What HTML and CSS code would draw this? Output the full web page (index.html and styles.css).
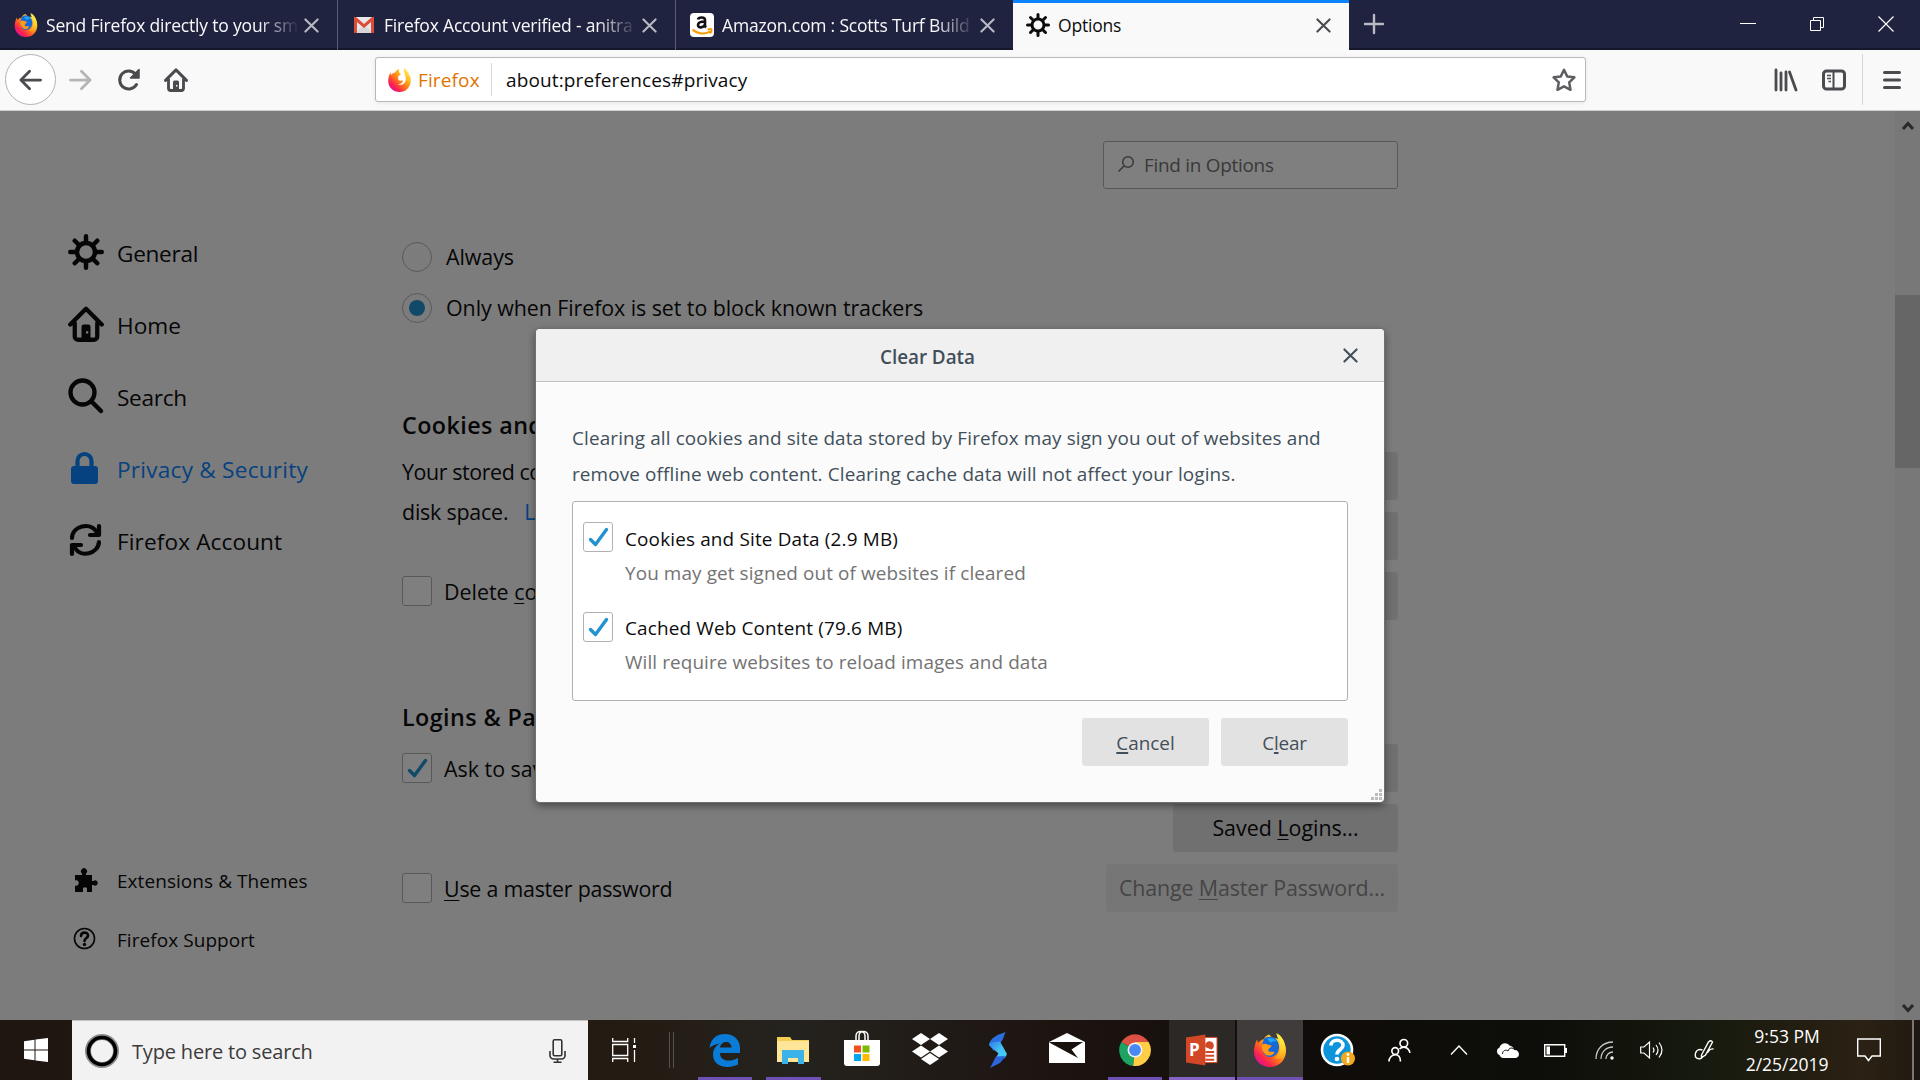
FILE: index.html
```html
<!DOCTYPE html>
<html lang="en">
<head>
<meta charset="utf-8">
<title>Options</title>
<link rel="stylesheet" href="styles.css">
</head>
<body>
<svg class="sprite" aria-hidden="true">
  <defs>
    <linearGradient id="ff-body" x1="0.9" y1="0.1" x2="0.2" y2="0.9">
      <stop offset="0" stop-color="#fff44f"/><stop offset="0.35" stop-color="#ffae1c"/><stop offset="0.62" stop-color="#ff6a1f"/><stop offset="0.85" stop-color="#ff2150"/><stop offset="1" stop-color="#e31587"/>
    </linearGradient>
    <linearGradient id="ff-flame" x1="0.5" y1="0" x2="0.5" y2="1">
      <stop offset="0" stop-color="#fff44f"/><stop offset="0.6" stop-color="#ffd22e"/><stop offset="1" stop-color="#ff9a16"/>
    </linearGradient>
    <linearGradient id="swift" x1="0" y1="0" x2="1" y2="1">
      <stop offset="0" stop-color="#2c7be5"/><stop offset="0.55" stop-color="#45c4f5"/><stop offset="1" stop-color="#3fd0f7"/>
    </linearGradient>
    <symbol id="firefox" viewBox="0 0 32 34">
      <path d="M3.2 6.5 4 10 C5.5 8 8 6.500 10 6 10.500 4 13 2 15 1.500 L19 5 26 6 C26 3 24 2 23 0 27.500 3 29 6 30 10 31.500 12 32 15 32 18 32 27 25 34 16 34 7 34 0 27.500 0 18.500 0 14 1.500 9 3.200 6.500Z" fill="url(#ff-body)"/>
      <path d="M10 6 C12 3.500 17 3 20 4.500 23 6.500 25.500 10 25 15 24.500 21 20 24 16 24 11 24 8.500 20 9 16 L8 12Z" fill="#1668d8"/>
      <path d="M13 6 C16 4 21 5 22.500 9 21 8 18 8 17 10Z" fill="#19a9f5"/>
      <path d="M8 11.500 C10 10.500 12 10.500 13.500 11.500 L17.500 12.500 C17.500 14 15.500 15 14.500 16 L14.500 18.500 C16.500 19.500 18.500 18 20.500 19 19.500 22 16.500 23 14 22.500 10 21.500 7.500 17 8 11.500Z" fill="#ff9a16"/>
      <path d="M22.500 0 C22 4 27 8 26.500 15 26 20 24 23 20 25 L28 26 C33 20 32 10 28.500 6 26.500 3.500 24 2 22.500 0Z" fill="url(#ff-flame)"/>
    </symbol>
    <symbol id="firefox-mono" viewBox="0 0 32 34">
      <path d="M3.200 6.500 4 10 C5.500 8 8 6.500 10 6 10.500 4 13 2 15 1.500 L15.500 6 18 9 14 12 14.500 17 C17 19 19 17 21 18 20 22 17 23 14 22.500 19 26 25 22 25 16 25 9 21 5 22.500 0 25 3 29 6 30 10 31.500 12 32 15 32 18 32 27 25 34 16 34 7 34 0 27.500 0 18.500 0 14 1.500 9 3.200 6.500Z" fill="url(#ff-body)"/>
    </symbol>
    <symbol id="gear" viewBox="0 0 32 32">
      <circle cx="16" cy="16" r="8" fill="none" stroke="currentColor" stroke-width="4"/>
      <path d="M16 2v5M16 25v5M2 16h5M25 16h5M6 6l4 4M22 22l4 4M26 6l-4 4M10 22l-4 4" stroke="currentColor" stroke-width="4" stroke-linecap="round"/>
    </symbol>
    <symbol id="house" viewBox="0 0 32 32">
      <path d="M2 16.500 16 2.500 30 16.500M6 15V27a3 3 0 0 0 3 3H23a3 3 0 0 0 3-3V15" fill="none" stroke="currentColor" stroke-width="3.800" stroke-linecap="round" stroke-linejoin="round"/>
      <path fill-rule="evenodd" d="M12 18.500a2 2 0 0 1 2-2h4a2 2 0 0 1 2 2V30h-8zM16 22.500v2h2v-2z" fill="currentColor"/>
    </symbol>
    <symbol id="cross" viewBox="0 0 16 16"><path d="M1.500 1.500l13 13M14.500 1.500l-13 13" stroke="currentColor" stroke-width="2.200" stroke-linecap="round"/></symbol>
    <symbol id="tick" viewBox="0 0 30 30"><path d="M7.500 17.500 12.500 22.500 23.500 7.500" fill="none" stroke="#2292d0" stroke-width="3.400" stroke-linecap="round" stroke-linejoin="round"/></symbol>
  </defs>
</svg>

<header class="tabbar">
  <div class="tab">
    <svg class="favicon"><use href="#firefox"/></svg>
    <span class="tab-title tab-fade">Send Firefox directly to your sm</span>
    <svg class="tab-close"><use href="#cross"/></svg>
  </div>
  <div class="tab">
    <svg class="favicon" viewBox="0 0 24 24"><path d="M3 4h18v16H3z" fill="#e8e8e8"/><path d="M3 20l9-8 9 8z" fill="#d6d6d6"/><path d="M2 20V4h2l8 7 8-7h2v16h-3V9l-7 6-7-6v11z" fill="#dd4b39"/></svg>
    <span class="tab-title tab-fade">Firefox Account verified - anitra</span>
    <svg class="tab-close"><use href="#cross"/></svg>
  </div>
  <div class="tab tab-last">
    <svg class="favicon" viewBox="0 0 24 24"><rect width="24" height="24" rx="4" fill="#fff"/><path d="M8 6.500C8.500 4 15 3.500 15 7V12.500C15 13.500 15.500 14 16 14.500M15 8.500C10 8.500 8 9.500 8 12 8 15.500 13.500 15 15 11.500" fill="none" stroke="#111" stroke-width="2.600"/><path d="M2.500 16.500C8 21.500 15 21.500 20 18.500M17.500 16.500c2-.5 3.500-.5 4 0 .3 1-.3 2.500-1.500 4" fill="none" stroke="#f90" stroke-width="2"/></svg>
    <span class="tab-title tab-fade">Amazon.com : Scotts Turf Build</span>
    <svg class="tab-close"><use href="#cross"/></svg>
  </div>
  <div class="tab tab-active">
    <svg class="favicon"><use href="#gear"/></svg>
    <span class="tab-title">Options</span>
    <svg class="tab-close"><use href="#cross"/></svg>
  </div>
  <svg class="new-tab" viewBox="0 0 22 22"><path d="M11 2v18M2 11h18" stroke="#b9b9c3" stroke-width="2.400" stroke-linecap="round"/></svg>
  <div class="window-buttons">
    <svg viewBox="0 0 16 16"><path d="M0 7.500h16" stroke="#fff"/></svg>
    <svg viewBox="0 0 16 16"><path d="M1.500 4.500h10v10h-10zM4.500 4V1.500h10v10H12" fill="none" stroke="#fff"/></svg>
    <svg viewBox="0 0 16 16"><path d="M.5.5l15 15M15.500.5l-15 15" stroke="#fff" stroke-width="1.200"/></svg>
  </div>
</header>

<nav class="toolbar">
  <div class="back"><svg viewBox="0 0 26 24"><path d="M24 12H3M12 2.500 2.500 12 12 21.500" fill="none" stroke="#4a4a4f" stroke-width="3" stroke-linecap="round" stroke-linejoin="round"/></svg></div>
  <svg class="nav-forward" viewBox="0 0 26 24"><path d="M2 12H23M14 2.500 23.500 12 14 21.500" fill="none" stroke="#b5b5b7" stroke-width="3" stroke-linecap="round" stroke-linejoin="round"/></svg>
  <svg class="nav-reload" viewBox="0 0 24 24"><path d="M19.500 16.500A9 9 0 1 1 18.500 6" fill="none" stroke="#4a4a4f" stroke-width="3" stroke-linecap="round"/><path d="M22 1.500V10H13.500z" fill="#4a4a4f" stroke="#4a4a4f" stroke-width="1.500" stroke-linejoin="round"/></svg>
  <svg class="nav-home"><use href="#house"/></svg>
  <div class="urlbar">
    <svg class="url-logo"><use href="#firefox-mono"/></svg>
    <span class="url-brand">Firefox</span>
    <span class="url-text">about:preferences#privacy</span>
    <svg class="url-star" viewBox="0 0 24 24"><path d="M12 1.800 15.200 8.400 22.400 9.300 17.200 14.400 18.500 21.800 12 18.300 5.500 21.800 6.800 14.400 1.600 9.300 8.800 8.400Z" fill="none" stroke="#5f5f63" stroke-width="2.500" stroke-linejoin="round"/></svg>
  </div>
  <svg class="nav-library" viewBox="0 0 24 24"><path d="M2 2v20M7 5v17M12 4v18M15.500 4 22 22" stroke="#4a4a4f" stroke-width="2.800" stroke-linecap="round"/></svg>
  <svg class="nav-panel" viewBox="0 0 24 24"><rect x="1.500" y="3" width="21" height="18" rx="3" fill="none" stroke="#4a4a4f" stroke-width="3"/><path d="M11.500 3v18" stroke="#4a4a4f" stroke-width="2"/><path d="M5 7.500h4M5 10.500h4M6.500 13.500h2.500" stroke="#4a4a4f" stroke-width="1.500"/></svg>
  <div class="menu-cell"><svg viewBox="0 0 18 20"><path d="M1.500 2.500h15M1.500 10h15M1.500 17.500h15" stroke="#4a4a4f" stroke-width="3" stroke-linecap="round"/></svg></div>
</nav>

<main class="content">
  <aside class="sidebar">
    <ul class="categories">
      <li class="cat cat-tight"><svg class="cat-icon"><use href="#gear"/></svg><span>General</span></li>
      <li class="cat"><svg class="cat-icon"><use href="#house"/></svg><span>Home</span></li>
      <li class="cat cat-tight"><svg class="cat-icon" viewBox="0 0 36 36"><circle cx="14.500" cy="14.500" r="12" fill="none" stroke="currentColor" stroke-width="4.300"/><path d="M23.500 23.500 33 33" stroke="currentColor" stroke-width="4.500" stroke-linecap="round"/></svg><span>Search</span></li>
      <li class="cat cat-selected"><svg class="cat-icon" viewBox="0 0 36 36"><rect x="3" y="16" width="27" height="18" rx="3" fill="currentColor"/><path d="M9.500 17v-6a7 7 0 0 1 14 0v6" fill="none" stroke="currentColor" stroke-width="4.200"/></svg><span>Privacy &amp; Security</span></li>
      <li class="cat cat-wide"><svg class="cat-icon" viewBox="0 0 36 36"><path d="M4 16C4.500 4 22 -.500 28.500 10M31 20C30 32 13 36 7 26" fill="none" stroke="currentColor" stroke-width="4.200" stroke-linecap="round"/><path d="M31 4v9H22M4 32v-9h9" fill="none" stroke="currentColor" stroke-width="4.200" stroke-linecap="round" stroke-linejoin="round"/></svg><span>Firefox Account</span></li>
    </ul>
    <ul class="side-links">
      <li><svg class="side-icon" viewBox="0 0 24 24"><path fill="currentColor" d="M2 7h7V5.500a3 3 0 1 1 4 0V7h6v6h1.500a2.600 2.600 0 1 1 0 4H19v7h-5v-2.500c1-3-5-3-4 0V24H2v-6.500c5 1.500 5-6.500 0-5z"/></svg>Extensions &amp; Themes</li>
      <li><svg class="side-icon" viewBox="0 0 24 24"><circle cx="11.500" cy="11.500" r="10" fill="none" stroke="currentColor" stroke-width="1.600"/><path d="M8 9C8 4.500 15 4.500 15 8.700 15 11 11.500 11.200 11.500 14" fill="none" stroke="currentColor" stroke-width="2.600" stroke-linecap="round"/><circle cx="11.500" cy="17.500" r="1.700" fill="currentColor"/></svg>Firefox Support</li>
    </ul>
  </aside>

  <section class="pane">
    <div class="find"><svg viewBox="0 0 18 18"><circle cx="11" cy="7" r="5.300" fill="none" stroke="#737373" stroke-width="1.500"/><path d="M7 11 1.500 16.500" stroke="#737373" stroke-width="1.600"/></svg>Find in Options</div>
    <div class="radios">
      <div class="option radio-option"><span class="radio"></span>Always</div>
      <div class="option radio-option"><span class="radio radio-on"></span>Only when Firefox is set to block known trackers</div>
    </div>
    <h2>Cookies and Site Data</h2>
    <div class="group">
      <div class="group-main">
        <p class="stored">Your stored cookies<br><span class="disk">disk space.</span><a>Learn more</a></p>
        <div class="option opt-delete"><span class="box"></span><span class="option-label">Delete <u>c</u>ookies</span></div>
      </div>
      <div class="group-buttons">
        <div class="button"></div>
        <div class="button"></div>
        <div class="button"></div>
      </div>
    </div>
    <h2 class="logins-heading">Logins &amp; Passwords</h2>
    <div class="group">
      <div class="group-main">
        <div class="option opt-ask"><span class="box"><svg><use href="#tick"/></svg></span><span class="option-label">Ask to save</span></div>
        <div class="option opt-master"><span class="box"></span><span class="option-label"><u>U</u>se a master password</span></div>
      </div>
      <div class="group-buttons">
        <div class="button"></div>
        <div class="button"><span>Saved <u>L</u>ogins...</span></div>
        <div class="button button-disabled"><span>Change <u>M</u>aster Password...</span></div>
      </div>
    </div>
  </section>

  <div class="scrollbar">
    <svg viewBox="0 0 12 10"><path d="M1 8 6 2.500 11 8" fill="none" stroke="#505050" stroke-width="3"/></svg>
    <div class="thumb"></div>
    <svg viewBox="0 0 12 10"><path d="M1 2 6 7.500 11 2" fill="none" stroke="#505050" stroke-width="3"/></svg>
  </div>

  <div class="overlay">
    <div class="dialog">
      <div class="dialog-head"><span>Clear Data</span><svg class="dialog-close"><use href="#cross"/></svg></div>
      <div class="dialog-body">
        <p class="intro">Clearing all cookies and site data stored by Firefox may sign you out of websites and<br>remove offline web content. Clearing cache data will not affect your logins.</p>
        <div class="choices">
          <div class="choice">
            <span class="box"><svg><use href="#tick"/></svg></span>
            <div class="choice-text"><span class="choice-label">Cookies and Site Data (2.9 MB)</span><span class="choice-note">You may get signed out of websites if cleared</span></div>
          </div>
          <div class="choice choice-cache">
            <span class="box"><svg><use href="#tick"/></svg></span>
            <div class="choice-text"><span class="choice-label">Cached Web Content (79.6 MB)</span><span class="choice-note">Will require websites to reload images and data</span></div>
          </div>
        </div>
        <div class="dialog-buttons">
          <div class="dialog-button"><span><u>C</u>ancel</span></div>
          <div class="dialog-button dialog-button-tight"><span>C<u>l</u>ear</span></div>
        </div>
      </div>
      <svg class="resizer" viewBox="0 0 11 11"><path d="M8 0h3v3H8zM4 4h3v3H4zM8 4h3v3H8zM0 8h3v3H0zM4 8h3v3H4zM8 8h3v3H8z" fill="#bcbcbc"/></svg>
    </div>
  </div>
</main>

<footer class="taskbar">
  <div class="start"><svg viewBox="0 0 24 24"><path d="M0 3.200 10.500 1.800V11.400H0zM11.500 1.600 24 0V11.400H11.500zM0 12.400H10.500V22.200L0 20.800zM11.500 12.400H24V24L11.500 22.400z" fill="#fff"/></svg></div>
  <div class="search">
    <svg class="ring" viewBox="0 0 34 34"><circle cx="17" cy="17" r="14" fill="none" stroke="#8a8a8a" stroke-width="6"/><circle cx="17" cy="17" r="13.500" fill="none" stroke="#000" stroke-width="3.600"/></svg>
    <span class="search-text">Type here to search</span>
    <svg class="mic" viewBox="0 0 17 24"><rect x="4.200" y=".8" width="8.600" height="16" rx="1.500" fill="none" stroke="#333" stroke-width="1.600"/><path d="M1 12v4.500a3.500 3.500 0 0 0 3.500 3.500h8a3.500 3.500 0 0 0 3.500-3.500V12M8.500 20v3.200M4.500 23.200h8" fill="none" stroke="#333" stroke-width="1.600"/></svg>
  </div>
  <div class="task-view"><svg viewBox="0 0 25 24"><path d="M.7 0v3.500h15V0M.7 6.500h15v11H.7zM.7 24v-3.500h15V24M22.500 0v5M22.500 12v12" fill="none" stroke="#fff" stroke-width="1.300"/><path d="M21 7h3v3h-3z" fill="#fff"/></svg></div>
  <div class="divider"></div>
  <div class="apps">
    <div class="app app-open"><svg viewBox="0 0 32 34"><path d="M.5 15C2 5 8 1 16 1c10 0 15 7 15 14.500V20H11c0 9 11 9 18 5v6.500C20 36 4 35 4 21.500 4 16 7 12.500 11 10.500 6 11 2.500 13 .5 15zM11 14.500h11.500C22.500 7 12 7 11 14.500z" fill="#0a7bd6"/></svg></div>
    <div class="app app-open"><svg viewBox="0 0 32 34"><path d="M0 4h13l2 3h17v22H0z" fill="#f5cf54"/><path d="M0 8h32v21H0z" fill="#ffe597"/><path d="M5 31V17h22v14h-6v-6H11v6z" fill="#3bb3e8"/></svg></div>
    <div class="app"><svg class="store" viewBox="0 0 36 36"><path d="M12 12V6c0-6 9-6 9 0v6M15 12V6c0-6 9-6 9 0v6" fill="none" stroke="#fff" stroke-width="1.500"/><path d="M0 10h36v23a3 3 0 0 1-3 3H3a3 3 0 0 1-3-3z" fill="#fff"/><path d="M10 15.500h7v7h-7z" fill="#f25022"/><path d="M18.500 15.500h7v7h-7z" fill="#7fba00"/><path d="M10 24h7v7h-7z" fill="#00a4ef"/><path d="M18.500 24h7v7h-7z" fill="#ffb900"/></svg></div>
    <div class="app"><svg class="dropbox" viewBox="0 0 36 32"><path d="M9 0l9 6-9 6-9-6zM27 0l9 6-9 6-9-6zM9 12.500l9 6-9 6-9-6zM27 12.500l9 6-9 6-9-6zM18 20l9 6-9 6-9-6z" fill="#fff"/></svg></div>
    <div class="app"><svg class="swift-icon" viewBox="0 0 18 36"><path d="M16.500 0C8 3 1 6 0 13L5 19 13.500 8z" fill="#2c6fe0"/><path d="M1 10.500 11 9.500 18 22 16 26 6 27 9.500 21.500 0 13z" fill="url(#swift)"/><path d="M7 24.500 17 24 11 31 1 36z" fill="#2a66da"/></svg></div>
    <div class="app"><svg class="mail" viewBox="0 0 36 30"><path d="M0 9 18 0 36 9V30H0z" fill="#fff"/><path d="M0 9H34L22.500 16.500 29 25 2 10.500z" fill="#17110e"/></svg></div>
    <div class="app app-open"><svg viewBox="0 0 34 34"><path d="M17 17 2.500 8.500A17 17 0 0 1 31.500 8.500z" fill="#dd5144"/><path d="M17 17 15 34A17 17 0 0 1 2.500 8.500z" fill="#1da362"/><path d="M17 17V8.500H31.500A17 17 0 0 1 15 34z" fill="#ffcd46"/><circle cx="17" cy="17" r="8" fill="#f1f1f1"/><circle cx="17" cy="17" r="6.300" fill="#4a89f4"/></svg></div>
    <div class="app app-open app-window"><svg viewBox="0 0 33 34"><path d="M17 4h15v26H17z" fill="#fff"/><path d="M17 4h15v26H17" fill="none" stroke="#d24726"/><path d="M20 19h9M20 23h9M20 27h9" stroke="#d24726" stroke-width="2"/><path d="M20 14a4.500 4.500 0 1 1 6 2.500z" fill="#d24726"/><path d="M0 4 20 1V33L0 30z" fill="#d24726"/></svg><span class="ppt-letter">P</span></div>
    <div class="app app-open app-window app-focused"><svg><use href="#firefox"/></svg></div>
  </div>
  <div class="tray">
    <svg class="tray-help" viewBox="0 0 34 34"><circle cx="16" cy="17" r="15" fill="#0e94dc" stroke="#fff" stroke-width="2.600"/><path d="M10 12.500C10 5.500 22 5.500 22 12.500 22 16.500 16 16.500 16 21.500" fill="none" stroke="#fff" stroke-width="3.600"/><circle cx="16" cy="26" r="2.300" fill="#fff"/><circle cx="27" cy="25.500" r="7" fill="#f6a81c"/><path d="M27 24v6" stroke="#fff" stroke-width="2.400"/><circle cx="27" cy="21.500" r="1.400" fill="#fff"/></svg>
    <svg class="tray-people" viewBox="0 0 24 24"><g fill="none" stroke="#fff" stroke-width="1.700"><circle cx="16.500" cy="5" r="4"/><circle cx="7.500" cy="13" r="3.500"/><path d="M1 24C1 20 4 17 7.500 17S13 20 13 24M12 11c3-3 9-3 11 4"/></g></svg>
    <svg class="tray-up" viewBox="0 0 18 12"><path d="M1 10.500 9 2 17 10.500" fill="none" stroke="#fff" stroke-width="1.400"/></svg>
    <svg class="tray-cloud" viewBox="0 0 24 16"><path d="M4 13A4 4 0 0 1 4 5.500C5 1 11-.5 14 3.500 17 4 18.500 6 19 8 24 7.500 25.500 15.500 20 16H8C5.500 16 4.500 14.500 4 13z" fill="#fff"/><path d="M7 12C7 8 11 7.500 12.500 9 13.500 5.500 17 5 19.500 8" fill="none" stroke="#111" stroke-width="1"/></svg>
    <svg class="tray-battery" viewBox="0 0 23 13"><path d="M.7.7h20v11.600H.7z" fill="none" stroke="#fff" stroke-width="1.400"/><path d="M2.500 2.500h3.500v8H2.500zM21 4h2v5h-2z" fill="#fff"/></svg>
    <svg class="tray-wifi" viewBox="0 0 19 19"><path d="M1 18C1 8 8 1 18 1M6 18C6 11 11 6 18 6M11 18c0-4 3-7 7-7" fill="none" stroke="#c8c8c8" stroke-width="1.300"/><circle cx="17" cy="17" r="1.700" fill="#fff"/></svg>
    <svg class="tray-sound" viewBox="0 0 23 18"><path d="M.7 6H4L9.500 1V17L4 12H.7z" fill="none" stroke="#fff" stroke-width="1.200"/><path d="M13 6.500q2 2.500 0 5M16 4q4 5 0 10M19 1.500q6 7.500 0 15" fill="none" stroke="#fff" stroke-width="1.200"/></svg>
    <svg class="tray-pen" viewBox="0 0 20 20"><path d="M7 15 14 2q2.500-2.500 4 0L11 15l-4 2.500zM8 10C3 8 0 12 1 17c2.500 3 7 2 7-1M12 13c3 0 1-5 7-4" fill="none" stroke="#fff" stroke-width="1.400"/></svg>
    <div class="clock"><span>9:53 PM</span><span>2/25/2019</span></div>
    <svg class="tray-note" viewBox="0 0 24 24"><path d="M.7 1h22.600v17H15l-3.500 4.500L8 18H.7z" fill="none" stroke="#fff" stroke-width="1.400"/></svg>
    <div class="show-desktop"></div>
  </div>
</footer>
</body>
</html>
```

FILE: styles.css
```css
* { box-sizing: border-box; }
body {
  margin: 0;
  width: 1920px;
  height: 1080px;
  overflow: hidden;
  display: flex;
  flex-direction: column;
  font-family: "Open Sans", "Noto Sans", sans-serif;
  color: #0c0c0d;
}
svg { display: block; flex: none; overflow: visible; }
ul, p, h2 { margin: 0; padding: 0; list-style: none; }
u { text-decoration-thickness: 1px; text-underline-offset: 3px; text-decoration-skip-ink: none; }
.sprite { position: absolute; width: 0; height: 0; }

/* Tab strip */
.tabbar { height: 50px; display: flex; align-items: center; background: #202340; box-shadow: inset 0 -2px 0 #15172b; }
.tab { width: 338px; height: 50px; padding: 0 18px 0 14px; display: flex; align-items: center; border-right: 1px solid #5a5c75; color: #f9f9fa; }
.tab-last { width: 337px; border-right: 0; }
.tab-active { width: 336px; background: #f9f9fa; color: #0c0c0d; border-right: 0; border-top: 3px solid #0a84ff; padding: 0 18px 3px 13px; }
.favicon { width: 24px; height: 24px; }
.tab-title { flex: 1; margin: 0 5px 0 8px; overflow: hidden; white-space: nowrap; font-size: 17.5px; letter-spacing: -.19px; line-height: 28px; }
.tab-fade { -webkit-mask-image: linear-gradient(90deg, #000 84%, transparent); mask-image: linear-gradient(90deg, #000 84%, transparent); }
.tab-close { width: 15px; height: 15px; color: #b9b9c3; }
.tab-active .tab-close { color: #4a4a4f; }
.new-tab { width: 22px; height: 22px; margin: -2px 0 0 14px; }
.window-buttons { margin: -3px 26px 0 auto; display: flex; gap: 53px; }
.window-buttons svg { width: 16px; height: 16px; }

/* Navigation toolbar */
.toolbar { height: 61px; padding: 0 19px 1px 5px; display: flex; align-items: center; background: #f9f9fa; border-bottom: 1px solid #d0d0d0; }
.back { width: 51px; height: 51px; border: 1px solid #b3b3b3; border-radius: 50%; background: #fff; display: flex; align-items: center; justify-content: center; }
.back svg { width: 25px; height: 22px; margin-right: 1px; }
.nav-forward { width: 25px; height: 22px; margin-left: 12px; }
.nav-reload { width: 24px; height: 24px; margin-left: 24px; }
.nav-home { width: 24px; height: 24px; margin-left: 23px; color: #4a4a4f; }
.urlbar { width: 1211px; height: 45px; margin-left: 187px; padding: 0 9px 0 12px; display: flex; align-items: center; background: #fff; border: 1px solid #b8b8b8; border-radius: 3px; box-shadow: 0 1px 4px rgba(0,0,0,.08); font-size: 19px; line-height: 32px; letter-spacing: .13px; }
.url-logo { width: 23px; height: 24px; }
.url-brand { width: 81px; padding: 1px 0 0 7px; color: #e07400; border-right: 1px solid #d7d7db; }
.url-text { flex: 1; padding: 1px 0 0 14px; color: #0c0c0d; }
.url-star { width: 24px; height: 24px; }
.nav-library { width: 24px; height: 24px; margin-left: 188px; }
.nav-panel { width: 24px; height: 24px; margin-left: 24px; }
.menu-cell { height: 51px; margin-left: auto; padding-left: 20px; border-left: 1px solid #d7d7db; display: flex; align-items: center; }
.menu-cell svg { width: 18px; height: 20px; }

/* Preferences page */
.content { position: relative; height: 909px; display: flex; background: #f9f9fa; }
.sidebar { width: 402px; padding: 105px 0 51px 68px; display: flex; flex-direction: column; justify-content: space-between; }
.cat { height: 72px; display: flex; align-items: center; gap: 13px; font-size: 22.6px; }
.cat span { padding-top: 2px; }
.cat-icon { width: 36px; height: 36px; }
.cat-tight { letter-spacing: -.3px; }
.cat-wide { letter-spacing: .12px; }
.cat-selected { color: #0a84ff; letter-spacing: .24px; }
.side-links li { height: 59px; display: flex; align-items: center; gap: 20px; padding-left: 5px; font-size: 19px; letter-spacing: .06px; }
.side-icon { width: 24px; height: 24px; margin-top: -2px; }

.pane { width: 996px; padding-top: 30px; display: flex; flex-direction: column; font-size: 21.4px; }
.find { align-self: flex-end; width: 295px; height: 48px; padding-left: 13px; display: flex; align-items: center; gap: 9px; border: 1px solid #b1b1b1; border-radius: 3px; background: #fff; color: #737373; font-size: 18.9px; letter-spacing: -.26px; }
.find svg { width: 18px; height: 18px; margin-top: -2px; }
.radios { margin-top: 53px; display: flex; flex-direction: column; gap: 21px; }
.option { height: 30px; display: flex; align-items: center; gap: 12px; white-space: nowrap; line-height: 30px; }
.option-label { padding-top: 2px; }
.radio-option { gap: 14px; letter-spacing: -.06px; }
.radio { width: 30px; height: 30px; border: 1px solid #b1b1b1; border-radius: 50%; display: flex; align-items: center; justify-content: center; }
.radio-on::before { content: ""; width: 16px; height: 16px; border-radius: 50%; background: #2292d0; }
.box { flex: none; width: 30px; height: 30px; border: 1px solid #b1b1b1; border-radius: 3px; background: #fff; }
.box svg { width: 30px; height: 30px; margin: -1px; }
h2 { margin-top: 86px; font-size: 23.3px; font-weight: 600; line-height: 32px; letter-spacing: .42px; }
.logins-heading { margin-top: 81px; }
.group { margin-top: 11px; display: flex; justify-content: space-between; }
.group-buttons { display: flex; flex-direction: column; align-items: flex-end; gap: 12px; }
.stored { line-height: 40px; letter-spacing: -.4px; white-space: nowrap; }
.disk { letter-spacing: -.2px; margin-right: 16px; }
.stored a { color: #0a84ff; }
.opt-delete { margin-top: 44px; }
.opt-ask { margin-top: 9px; }
.opt-master { margin-top: 90px; letter-spacing: -.23px; }
.button { width: 225px; height: 48px; padding-bottom: 2px; border-radius: 3px; background: #e1e1e2; display: flex; align-items: center; justify-content: center; white-space: nowrap; }
.button-disabled { width: 292px; background: #ededee; color: #8a8a8b; letter-spacing: -.13px; }

.scrollbar { width: 25px; margin-left: auto; padding: 10px 0 7px; display: flex; flex-direction: column; align-items: center; background: #f0f0f0; }
.scrollbar svg { width: 12px; height: 10px; }
.thumb { width: 25px; height: 173px; margin: 164px 0 auto; background: #cdcdcd; }

/* Modal dialog */
.overlay { position: absolute; inset: 0; display: flex; align-items: center; justify-content: center; background: rgba(0,0,0,.5); }
.dialog { position: relative; width: 848px; height: 473px; border-radius: 4px; background: #fbfbfb; box-shadow: 0 0 0 1px #707070, 0 3px 9px rgba(0,0,0,.5); color: #424f5a; font-size: 18.9px; }
.dialog-head { height: 53px; padding: 0 26px 0 344px; display: flex; justify-content: space-between; align-items: center; background: #f0f0f0; border-bottom: 1px solid #c1c1c1; border-radius: 4px 4px 0 0; }
.dialog-head span { font-weight: 600; padding-top: 3px; letter-spacing: -.05px; }
.dialog-close { width: 15px; height: 15px; }
.dialog-body { padding: 38px 36px 0; }
.intro { line-height: 36px; letter-spacing: .13px; white-space: nowrap; }
.choices { height: 200px; margin-top: 9px; padding: 20px 10px 0; display: flex; flex-direction: column; gap: 60px; border: 1px solid #b1b1b1; border-radius: 3px; background: #fff; }
.choice { height: 30px; display: flex; gap: 12px; }
.choice-text { display: flex; flex-direction: column; line-height: 34px; white-space: nowrap; }
.choice-cache .choice-text { margin-top: -1px; }
.choice-label { color: #0c0c0d; letter-spacing: .17px; }
.choice-note { color: #737373; letter-spacing: .11px; }
.dialog-buttons { margin-top: 17px; display: flex; justify-content: flex-end; gap: 12px; }
.dialog-button { width: 127px; height: 48px; border-radius: 3px; background: #e2e2e2; display: flex; align-items: center; justify-content: center; padding-top: 1px; }
.dialog-button u { text-decoration-thickness: 2px; text-underline-offset: 2px; }
.dialog-button-tight { letter-spacing: -.2px; }
.resizer { position: absolute; right: 2px; bottom: 2px; width: 11px; height: 11px; }

/* Taskbar */
.taskbar { height: 60px; display: flex; align-items: center; background: linear-gradient(90deg, #1f1612 0, #241b12 33%, #25231f 41%, #1d1410 55%, #100c0a 68%, #0d0e0a 80%, #171a0e 89%, #2b2114 97%, #211a12 100%); color: #fff; }
.start { width: 72px; display: flex; justify-content: center; }
.start svg { width: 24px; height: 24px; }
.search { width: 516px; height: 60px; padding: 0 22px 0 13px; display: flex; align-items: center; background: #f2f2f2; border-top: 1px solid #c4c4c4; color: #3b3b3b; }
.ring { width: 34px; height: 34px; }
.search-text { flex: 1; padding: 1px 0 0 13px; font-size: 20px; letter-spacing: -.18px; }
.mic { width: 17px; height: 24px; }
.task-view { margin-left: 24px; }
.task-view svg { width: 25px; height: 24px; }
.divider { width: 5px; height: 36px; margin-left: 32px; border: 1px solid #55524d; border-width: 0 1px; }
.apps { height: 60px; margin-left: 17px; display: flex; }
.app { position: relative; width: 68.300px; display: flex; align-items: center; justify-content: center; }
.app svg { width: 32px; height: 34px; }
.app-open::after { content: ""; position: absolute; bottom: 0; left: 7px; right: 7px; height: 3px; background: #6f50b5; }
.app-window { width: 66px; background: #2c2825; }
.app-window::after { left: 0; right: 0; background: #8662c5; }
.app-focused { margin-left: 2px; background: #403c3b; }
.app-focused::after { background: #6f50b5; }
.app .store { width: 36px; height: 36px; margin-top: -4px; }
.app .dropbox { width: 36px; height: 32px; margin-top: -2px; }
.app .swift-icon { width: 18px; height: 36px; }
.app .mail { width: 36px; height: 30px; margin-top: -4px; }
.ppt-letter { position: absolute; left: 20px; top: 16px; font-size: 17px; font-weight: 700; line-height: 28px; color: #fff; }
.tray { flex: 1; display: flex; align-items: center; }
.tray-help { width: 34px; height: 34px; margin-left: 18px; }
.tray-people { width: 23px; height: 24px; margin-left: 33px; }
.tray-up { width: 18px; height: 12px; margin-left: 39px; }
.tray-cloud { width: 25px; height: 16px; margin-left: 27px; }
.tray-battery { width: 23px; height: 13px; margin-left: 24px; }
.tray-wifi { width: 19px; height: 19px; margin-left: 28px; }
.tray-sound { width: 23px; height: 18px; margin-left: 26px; }
.tray-pen { width: 21px; height: 20px; margin-left: 31px; }
.clock { width: 96px; margin-left: 24px; display: flex; flex-direction: column; align-items: center; font-size: 17.5px; line-height: 28px; }
.tray-note { width: 24px; height: 24px; margin-left: 22px; }
.show-desktop { width: 8px; height: 60px; margin-left: auto; border-left: 2px solid #7d766e; background: #1d1813; }
```
